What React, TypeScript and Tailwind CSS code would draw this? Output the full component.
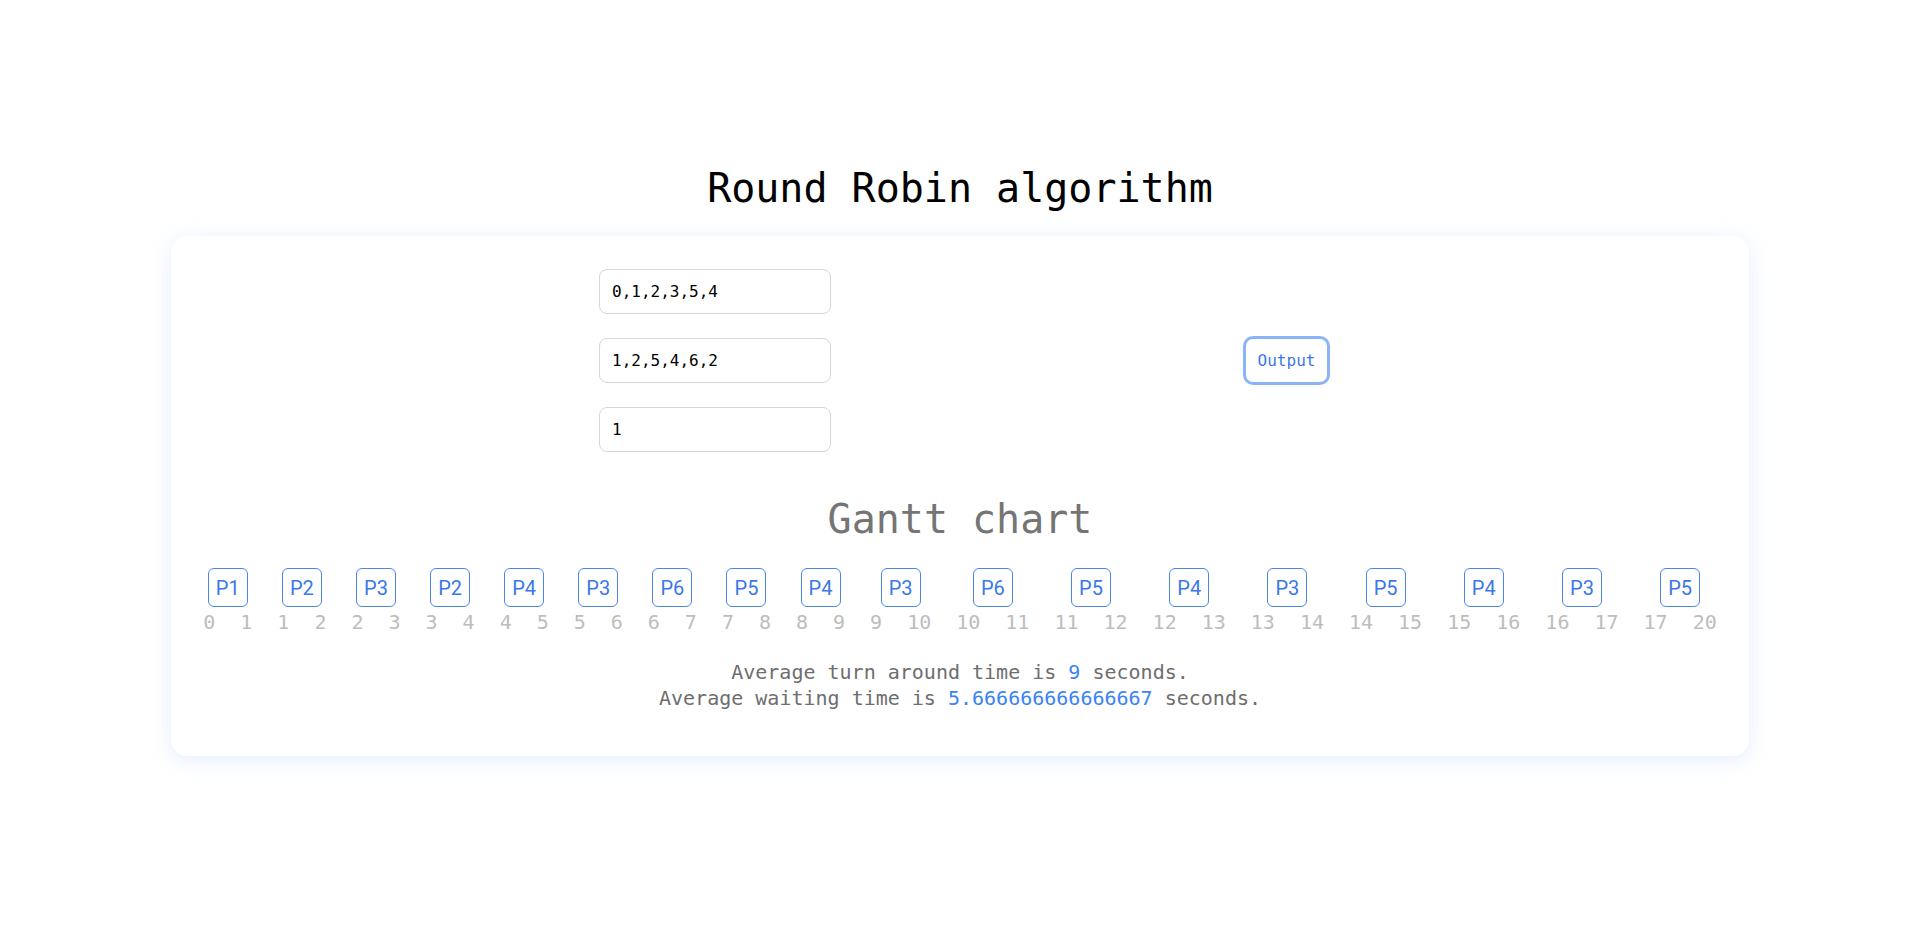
const mono = "font-['DejaVu_Sans_Mono','Liberation_Mono',monospace]"

const slots: { p: string; start: number; end: number }[] = [
  { p: 'P1', start: 0, end: 1 },
  { p: 'P2', start: 1, end: 2 },
  { p: 'P3', start: 2, end: 3 },
  { p: 'P2', start: 3, end: 4 },
  { p: 'P4', start: 4, end: 5 },
  { p: 'P3', start: 5, end: 6 },
  { p: 'P6', start: 6, end: 7 },
  { p: 'P5', start: 7, end: 8 },
  { p: 'P4', start: 8, end: 9 },
  { p: 'P3', start: 9, end: 10 },
  { p: 'P6', start: 10, end: 11 },
  { p: 'P5', start: 11, end: 12 },
  { p: 'P4', start: 12, end: 13 },
  { p: 'P3', start: 13, end: 14 },
  { p: 'P5', start: 14, end: 15 },
  { p: 'P4', start: 15, end: 16 },
  { p: 'P3', start: 16, end: 17 },
  { p: 'P5', start: 17, end: 20 },
]

function Field({ value }: { value: string }) {
  return (
    <input
      readOnly
      value={value}
      className={`${mono} w-[232px] h-[45px] rounded-lg border border-[#d6d6d6] bg-white px-3 text-[16px] text-black outline-none`}
    />
  )
}

export default function App() {
  return (
    <div className="min-h-screen bg-white pt-[162px]">
      <h1 className={`${mono} text-center text-[40px] leading-[52px] text-black`}>Round Robin algorithm</h1>

      <div className="mx-[171px] mt-[22px] rounded-2xl bg-white pb-[45px] pt-[33px] shadow-[0_4px_22px_rgba(96,150,240,0.16)]">
        {/* inputs + output */}
        <div className="flex items-center gap-[412px] pl-[428px]">
          <div className="flex flex-col gap-[24px]">
            <Field value="0,1,2,3,5,4" />
            <Field value="1,2,5,4,6,2" />
            <Field value="1" />
          </div>
          <button
            className={`${mono} h-[49px] w-[87px] rounded-[10px] border-[3px] border-[#8ab4f8] bg-white text-[16px] text-[#3b78e7]`}
          >
            Output
          </button>
        </div>

        <h2 className={`${mono} mt-[41px] text-center text-[40px] leading-[52px] text-[#757575]`}>Gantt chart</h2>

        {/* gantt row */}
        <div className="mt-[23px] flex justify-center gap-[25px]">
          {slots.map((s, i) => (
            <div key={i} className="flex flex-col items-center">
              <div className="flex h-[39px] w-[40px] items-center justify-center rounded-md border border-[#4a86e8] font-['Roboto',sans-serif] text-[20px] text-[#3b78e7]">
                {s.p}
              </div>
              <div className={`${mono} mt-[2px] flex gap-[25px] text-[20px] leading-[26px] text-[#bdbdbd]`}>
                <span>{s.start}</span>
                <span>{s.end}</span>
              </div>
            </div>
          ))}
        </div>

        {/* stats */}
        <div className={`${mono} mt-[24px] text-center text-[20px] leading-[26px] text-[#6e6e6e]`}>
          <p>
            Average turn around time is <span className="text-[#3b82f6]">9</span> seconds.
          </p>
          <p>
            Average waiting time is <span className="text-[#3b82f6]">5.666666666666667</span> seconds.
          </p>
        </div>
      </div>
    </div>
  )
}
